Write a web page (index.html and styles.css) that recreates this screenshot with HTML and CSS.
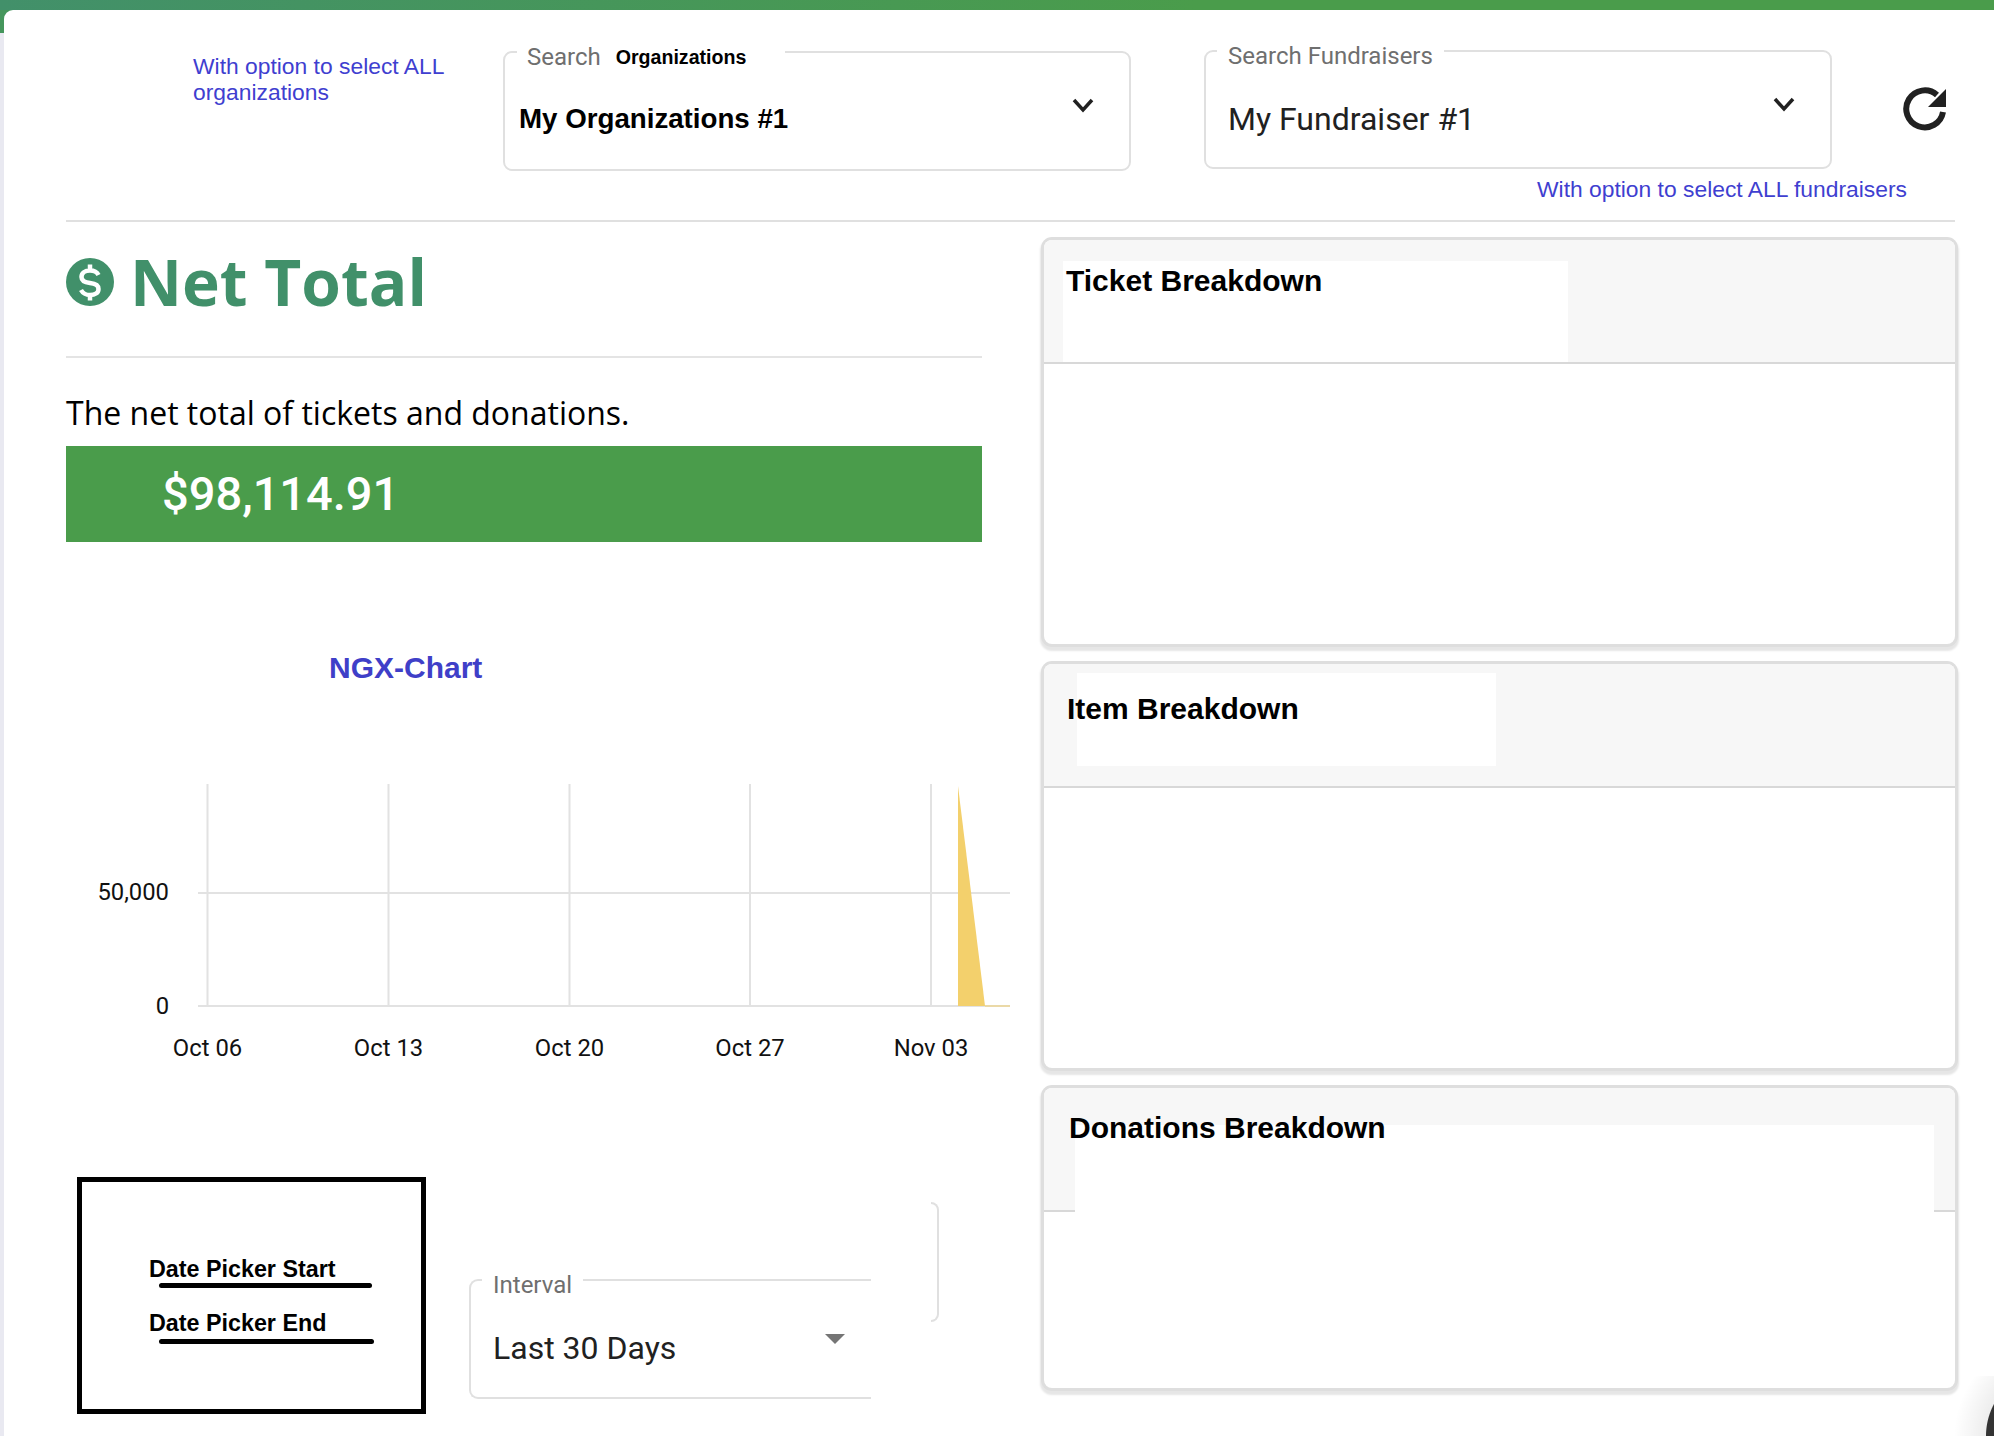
FILE: index.html
```html
<!DOCTYPE html>
<html lang="en">
<head>
<meta charset="utf-8">
<title>Net Total</title>
<link rel="stylesheet" href="styles.css">
</head>
<body>
<div class="sheet">
  <header class="toolbar">
    <p class="note note-org">With option to select ALL organizations</p>
    <div class="field field-org">
      <span class="field-label label-org">Search <b class="label-strong">Organizations</b></span>
      <span class="field-value value-org">My Organizations #1</span>
      <svg class="chevron chevron-org" viewBox="0 0 24 24"><path d="M3 7l9 10 9-10" /></svg>
    </div>
    <div class="fund-group">
      <div class="field field-fund">
        <span class="field-label label-fund">Search Fundraisers</span>
        <span class="field-value value-fund">My Fundraiser #1</span>
        <svg class="chevron chevron-fund" viewBox="0 0 24 24"><path d="M3 7l9 10 9-10" /></svg>
      </div>
      <p class="note note-fund">With option to select ALL fundraisers</p>
    </div>
    <svg class="refresh" viewBox="0 0 44 44"><path class="refresh-arc" d="M34 8A18.500 18.500 0 1 0 40 25" /><path class="refresh-head" d="M43 2V20H25z" /></svg>
  </header>
  <div class="columns">
    <section class="summary">
      <div class="summary-head">
        <svg class="dollar" viewBox="0 0 48 48"><circle cx="24" cy="24" r="24" fill="#41906a" /><path class="dollar-sign" d="M32.500 17C31 14 28 12.500 24 12.500C19 12.500 15.500 15 15.500 19C15.500 23.500 19.500 24.500 24 25C29 25.500 32.500 27 32.500 31C32.500 35 29 37 24 37C20 37 17 35.500 15 32M24 6.500V13M24 37V42.500" /></svg>
        <h1 class="summary-title">Net Total</h1>
      </div>
      <p class="summary-desc">The net total of tickets and donations.</p>
      <div class="amount-bar"><span class="amount">$98,114.91</span></div>
      <h2 class="chart-title">NGX-Chart</h2>
      <svg class="chart" width="944" height="300" viewBox="66 770 944 300">
        <g class="grid">
          <path d="M207.500 784V1006M388.500 784V1006M569.500 784V1006M750 784V1006M931 784V1006" />
          <path class="grid-h" d="M198 893H1010M198 1006H1010" />
        </g>
        <path class="area" d="M958 786L985 1006H958z" />
        <path class="area-line" d="M985 1006H1010" />
        <g class="tick">
          <text x="169" y="900" text-anchor="end">50,000</text>
          <text x="169" y="1014" text-anchor="end">0</text>
          <text x="207.500" y="1056" text-anchor="middle">Oct 06</text>
          <text x="388.500" y="1056" text-anchor="middle">Oct 13</text>
          <text x="569.500" y="1056" text-anchor="middle">Oct 20</text>
          <text x="750" y="1056" text-anchor="middle">Oct 27</text>
          <text x="931" y="1056" text-anchor="middle">Nov 03</text>
        </g>
      </svg>
      <div class="controls">
        <div class="dates">
          <div class="date date-start"><span class="date-label">Date Picker Start</span><span class="date-rule"></span></div>
          <div class="date date-end"><span class="date-label">Date Picker End</span><span class="date-rule"></span></div>
        </div>
        <div class="field field-interval">
          <span class="field-label label-interval">Interval</span>
          <span class="field-value value-interval">Last 30 Days</span>
          <span class="caret"></span>
        </div>
        <div class="bracket"></div>
      </div>
    </section>
    <aside class="cards">
      <article class="card card-tall">
        <div class="card-head head-ticket"><span class="mask mask-ticket"></span><h3 class="card-title">Ticket Breakdown</h3></div>
        <div class="card-body"></div>
      </article>
      <article class="card card-tall">
        <div class="card-head head-item"><span class="mask mask-item"></span><h3 class="card-title">Item Breakdown</h3></div>
        <div class="card-body"></div>
      </article>
      <article class="card card-short">
        <div class="card-head head-donation"><span class="mask mask-donation"></span><h3 class="card-title">Donations Breakdown</h3></div>
        <div class="card-body"></div>
      </article>
    </aside>
  </div>
</div>
<div class="chat-corner"></div>
</body>
</html>
```
FILE: styles.css
```css
* { box-sizing: border-box; }
html, body { margin: 0; height: 100%; overflow: hidden; }
body {
  padding: 10px 0 0 4px;
  background: linear-gradient(#45965c 33px, #e9e9f1 33px);
  font-family: Roboto, sans-serif;
  color: #000;
  position: relative;
}
body::before {
  content: "";
  position: absolute;
  left: 0; right: 0; top: 0;
  height: 10px;
  background: linear-gradient(90deg, #42906a, #4a9c4b 60%);
}
.sheet {
  height: 100%;
  padding: 0 39px 0 62px;
  background: #fff;
  border-top-left-radius: 9px;
  position: relative;
}
.toolbar {
  display: flex;
  align-items: flex-start;
  height: 212px;
  border-bottom: 2px solid #e0e0e0;
}
.note { margin: 0; color: #3f3fd0; font: 22.850px/26px "Liberation Sans", sans-serif; }
.note-org { width: 290px; margin: 43px 20px 0 127px; }
.field { position: relative; border: 2px solid #e0e0e0; border-radius: 9px; background: #fff; display: block; }
.field-label {
  position: absolute;
  top: -8px;
  background: #fff;
  color: #6f6f6f;
  font-size: 24px;
  line-height: 24px;
  white-space: nowrap;
}
.label-strong { margin-left: 9px; color: #000; font: bold 19.600px "Liberation Sans", sans-serif; vertical-align: 1px; }
.field-value { position: absolute; white-space: nowrap; }
.field-org { width: 628px; height: 120px; margin-top: 41px; }
.label-org { left: 12px; width: 268px; padding-left: 10px; }
.value-org { left: 14px; top: 48px; font: bold 27.700px/36px "Liberation Sans", sans-serif; }
.fund-group { width: 628px; margin: 40px 0 0 73px; }
.field-fund { height: 119px; }
.label-fund { left: 11px; padding: 0 11px; }
.value-fund { left: 22px; top: 47px; font-size: 32px; line-height: 40px; color: #212121; }
.note-fund { margin: 7px 0 0 333px; white-space: nowrap; }
.chevron { position: absolute; width: 24px; height: 24px; fill: none; stroke: #212121; stroke-width: 3.500px; }
.chevron-org { right: 34px; top: 40px; }
.chevron-fund { right: 34px; top: 40px; }
.refresh { width: 44px; height: 44px; margin: 77px 0 0 71px; flex: none; }
.refresh-arc { fill: none; stroke: #212121; stroke-width: 6px; }
.refresh-head { fill: #212121; }
.columns { display: flex; gap: 59px; align-items: flex-start; }
.summary { width: 916px; flex: none; }
.summary-head {
  display: flex;
  align-items: center;
  gap: 16px;
  height: 136px;
  padding: 0 0 14px;
  border-bottom: 2px solid #e4e4e4;
}
.dollar { width: 48px; height: 48px; flex: none; }
.dollar-sign { fill: none; stroke: #fff; stroke-width: 4.500px; }
.summary-title { margin: 0; color: #41906a; font: bold 64px/80px "Open Sans", sans-serif; }
.summary-desc { margin: 33px 0 0; font: 32px/44px "Open Sans", sans-serif; }
.amount-bar { height: 96px; margin-top: 11px; padding: 0 96px 2px; background: #4a9c4b; display: flex; align-items: center; }
.amount { color: #fff; font-size: 47px; font-weight: 500; }
.chart-title { margin: 108px 0 0 263px; font: bold 30px/36px "Liberation Sans", sans-serif; color: #3f3fc8; }
.chart { display: block; margin-top: 84px; overflow: hidden; }
.grid path { fill: none; stroke: #e2e2e2; stroke-width: 2px; }
.area { fill: #f3d06c; }
.area-line { fill: none; stroke: #f3d06c; stroke-width: 1px; }
.tick text { font-size: 23.800px; fill: #111; font-family: Roboto, sans-serif; }
.controls { display: flex; align-items: flex-start; margin: 107px 0 0 11px; }
.dates { width: 349px; height: 237px; border: 5px solid #000; padding: 74px 0 0 67px; flex: none; }
.date { display: flex; flex-direction: column; }
.date-end { margin-top: 22px; }
.date-label { font: bold 23.300px/27px "Liberation Sans", sans-serif; }
.date-rule { height: 5px; margin-left: 10px; border-radius: 3px; background: #000; }
.date-start .date-rule { width: 213px; }
.date-end .date-rule { width: 215px; margin-top: 2px; }
.field-interval { width: 402px; height: 120px; margin: 102px 0 0 43px; border-right: 0; border-radius: 9px 0 0 9px; flex: none; }
.label-interval { left: 11px; padding: 0 11px; }
.value-interval { left: 22px; top: 47px; font-size: 32px; line-height: 40px; color: #212121; }
.caret { position: absolute; left: 354px; top: 53px; border: solid transparent; border-width: 10px 10px 0; border-top-color: #757575; }
.bracket { width: 8px; height: 120px; margin: 25px 0 0 60px; border: 2px solid #e0e0e0; border-left: 0; border-radius: 0 9px 9px 0; flex: none; }
.cards { width: 911px; margin: 18px 0 0 3px; display: flex; flex-direction: column; gap: 20px; flex: none; }
.card { background: #fff; border-radius: 8px; box-shadow: 0 0 0 3px #dedede, 0 3px 2px 4px #e6e6e6; display: flex; flex-direction: column; overflow: hidden; }
.card-tall { height: 404px; }
.card-short { height: 300px; }
.card-head { height: 124px; background: #f7f7f7; border-bottom: 2px solid #d8d8d8; position: relative; flex: none; }
.card-body { flex: 1; }
.mask { position: absolute; background: #fff; }
.mask-ticket { left: 19px; top: 21px; width: 505px; height: 101px; }
.mask-item { left: 33px; top: 9px; width: 419px; height: 93px; }
.mask-donation { left: 31px; top: 37px; width: 859px; height: 87px; }
.card-title { position: relative; margin: 0; font: bold 30px/36px "Liberation Sans", sans-serif; }
.head-ticket { padding: 23px 0 0 22px; }
.head-item { padding: 27px 0 0 23px; }
.head-donation { padding: 22px 0 0 25px; }
.chat-corner {
  position: absolute;
  right: 0;
  bottom: 0;
  width: 60px;
  height: 60px;
  background: radial-gradient(circle 100px at 120px 60px, #333 67.500px, rgba(0,0,0,.07) 68.500px, rgba(0,0,0,0) 100px);
}
```
